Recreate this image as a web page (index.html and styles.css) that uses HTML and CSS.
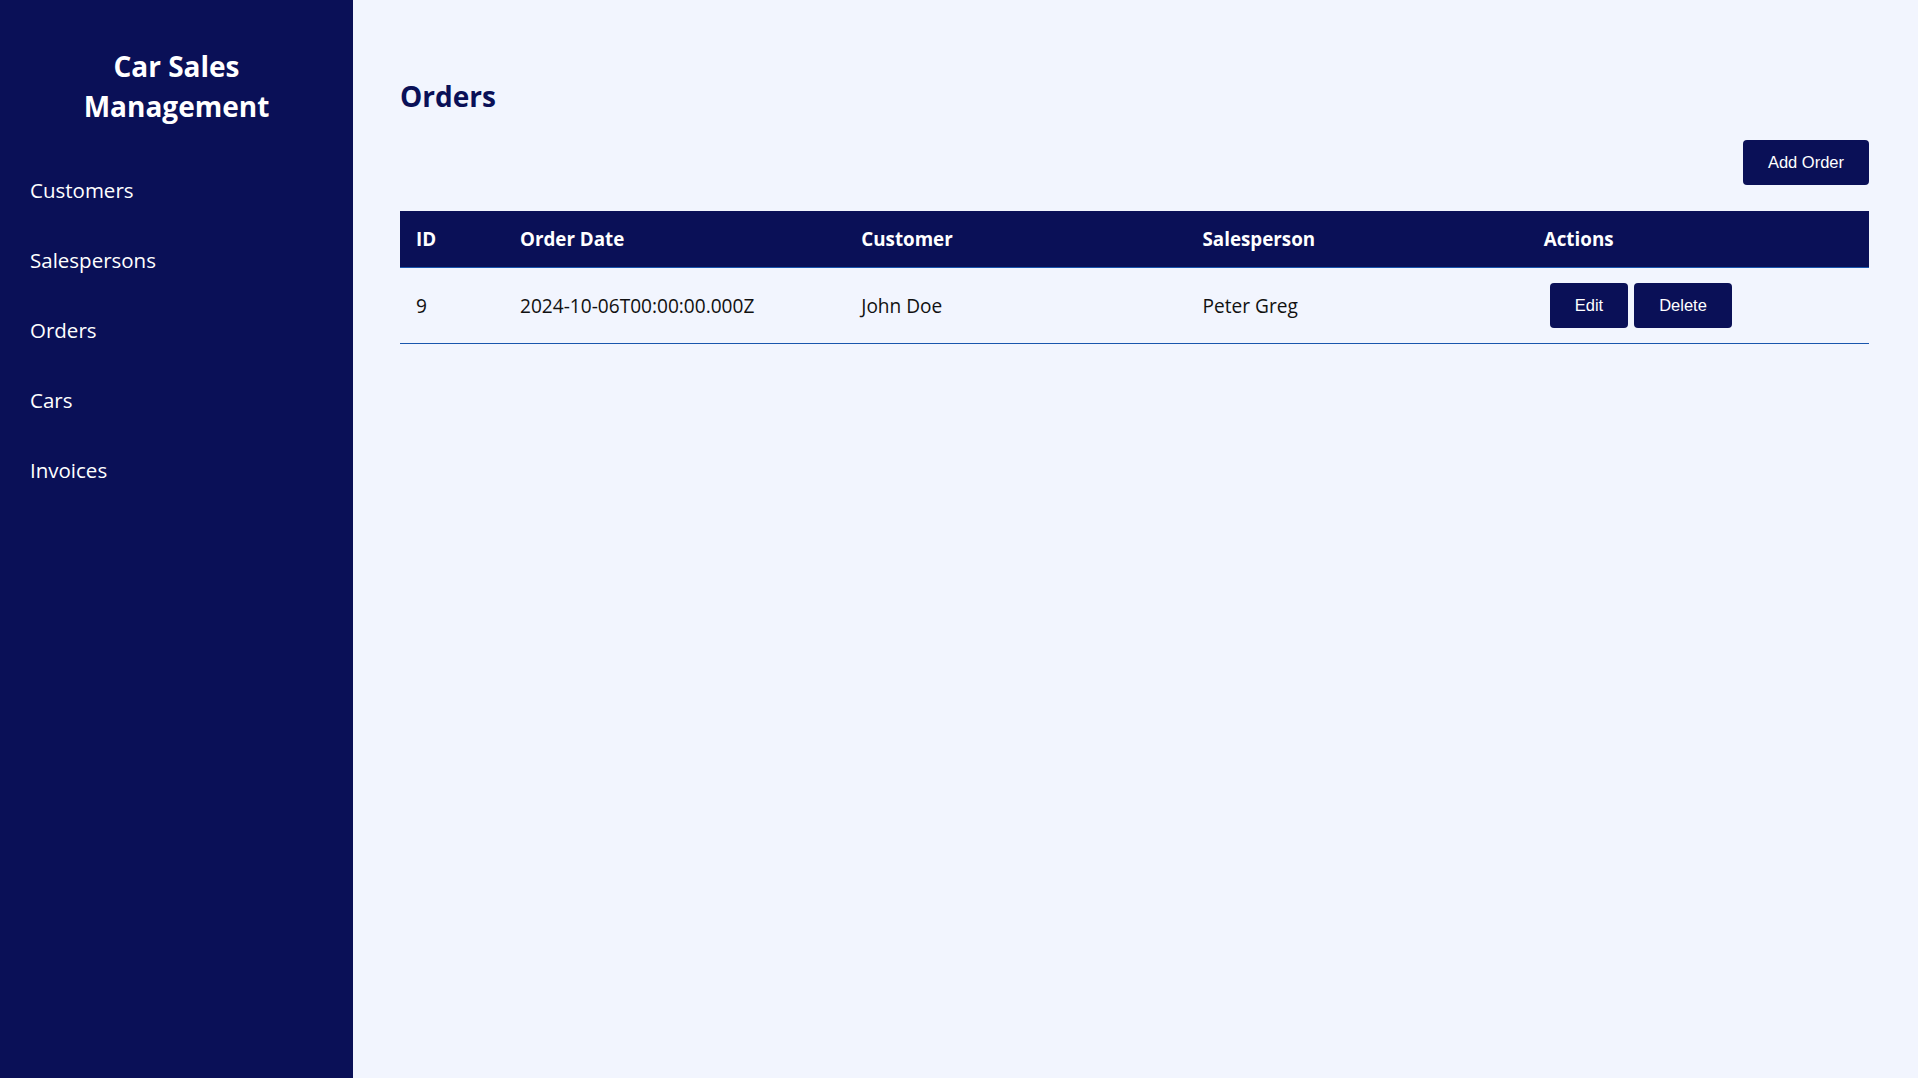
FILE: index.html
```html
<!DOCTYPE html>
<html lang="en">
<head>
<meta charset="utf-8">
<title>Car Sales Management</title>
<link rel="stylesheet" href="styles.css">
</head>
<body>
<div class="app">
  <aside class="sidebar">
    <h2 class="brand">Car Sales Management</h2>
    <nav class="nav">
      <a class="nav-item" href="#">Customers</a>
      <a class="nav-item" href="#">Salespersons</a>
      <a class="nav-item" href="#">Orders</a>
      <a class="nav-item" href="#">Cars</a>
      <a class="nav-item" href="#">Invoices</a>
    </nav>
  </aside>
  <main class="main">
    <h1 class="page-title">Orders</h1>
    <div class="toolbar">
      <button class="btn">Add Order</button>
    </div>
    <table class="table">
      <colgroup>
        <col class="col-id">
        <col>
        <col>
        <col>
        <col>
      </colgroup>
      <thead>
        <tr>
          <th>ID</th>
          <th>Order Date</th>
          <th>Customer</th>
          <th>Salesperson</th>
          <th>Actions</th>
        </tr>
      </thead>
      <tbody>
        <tr>
          <td>9</td>
          <td>2024-10-06T00:00:00.000Z</td>
          <td>John Doe</td>
          <td>Peter Greg</td>
          <td>
            <div class="actions">
              <button class="btn">Edit</button>
              <button class="btn">Delete</button>
            </div>
          </td>
        </tr>
      </tbody>
    </table>
  </main>
</div>
</body>
</html>
```

FILE: styles.css
```css
* { box-sizing: border-box; }

html, body {
  margin: 0;
  padding: 0;
  height: 100%;
}

body {
  font-family: "Open Sans", "Noto Sans", sans-serif;
  background: #f2f5fe;
  color: #111;
}

.app {
  display: flex;
  min-height: 100vh;
}

.sidebar {
  width: 353px;
  flex: 0 0 353px;
  background: #0a1057;
  color: #fff;
  padding: 46px 30px 0 30px;
}

.brand {
  margin: 0;
  text-align: center;
  font-size: 28px;
  line-height: 40px;
  font-weight: 700;
}

.nav {
  display: flex;
  flex-direction: column;
  margin-top: 29px;
}

.nav-item {
  color: #fff;
  text-decoration: none;
  font-size: 20.5px;
  line-height: 28px;
  padding: 21px 0;
}

.main {
  flex: 1;
  padding: 0 49px 0 47px;
}

.page-title {
  margin: 0;
  padding-top: 77px;
  font-size: 28px;
  line-height: 38px;
  font-weight: 700;
  color: #0a1057;
}

.toolbar {
  display: flex;
  justify-content: flex-end;
  margin-top: 25px;
}

.btn {
  font-family: "Liberation Sans", Arial, sans-serif;
  font-size: 16.5px;
  line-height: 19px;
  padding: 13px 25px;
  border: none;
  border-radius: 4px;
  background: #0a1057;
  color: #fff;
  cursor: pointer;
}

.table {
  width: 100%;
  margin-top: 26px;
  border-collapse: collapse;
  table-layout: fixed;
}

.col-id { width: 104px; }

.table th {
  background: #0a1057;
  color: #fff;
  text-align: left;
  font-size: 18.8px;
  font-weight: 700;
  line-height: 26px;
  padding: 15px 16px;
  border-bottom: 1px solid #1a56ad;
}

.table td {
  font-size: 19.1px;
  line-height: 26px;
  padding: 15px 16px;
  border-bottom: 1px solid #1a56ad;
  vertical-align: middle;
}

.actions {
  display: flex;
  gap: 6px;
  margin-left: 6px;
}
```
